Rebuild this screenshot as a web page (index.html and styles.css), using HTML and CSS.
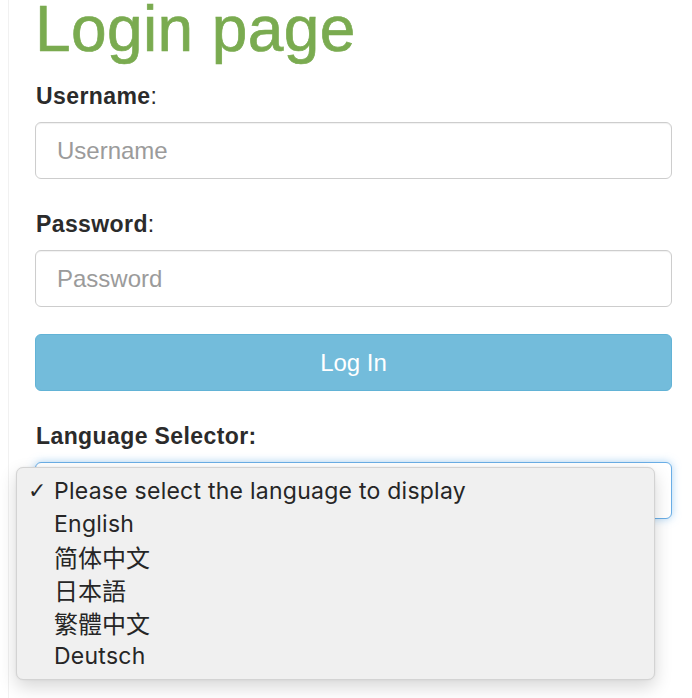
FILE: index.html
```html
<!DOCTYPE html>
<html lang="en">
<head>
<meta charset="utf-8">
<title>Login page</title>
<link rel="stylesheet" href="styles.css">
</head>
<body>
<div class="page">
  <h1 class="title">Login page</h1>
  <form class="form">
    <div class="group">
      <label class="label" for="username"><b>Username</b>:</label>
      <input class="input" id="username" type="text" placeholder="Username">
    </div>
    <div class="group">
      <label class="label" for="password"><b>Password</b>:</label>
      <input class="input" id="password" type="password" placeholder="Password">
    </div>
    <button class="btn" type="button">Log In</button>
    <div class="group lang">
      <label class="label"><b>Language Selector:</b></label>
      <div class="select-wrap">
        <div class="select"></div>
        <ul class="menu">
          <li class="item"><span class="check">✓</span>Please select the language to display</li>
          <li class="item">English</li>
          <li class="item cjk">简体中文</li>
          <li class="item cjk">日本語</li>
          <li class="item cjk">繁體中文</li>
          <li class="item">Deutsch</li>
        </ul>
      </div>
    </div>
  </form>
</div>
</body>
</html>
```

FILE: styles.css
```css
html, body {
  margin: 0;
  padding: 0;
  background: #ffffff;
}

body {
  font-family: "Liberation Sans", Arial, sans-serif;
  color: #333333;
  height: 698px;
  overflow: hidden;
}

.page {
  margin-left: 8px;
  border-left: 1px solid #f1f1f1;
  padding-left: 26px;
  padding-right: 20px;
  padding-top: 0;
  min-height: 698px;
  box-sizing: border-box;
}

.title {
  margin: 0 0 24px 0;
  padding-top: 0;
  font-size: 64px;
  line-height: 58px;
  font-weight: normal;
  letter-spacing: 0.4px;
  -webkit-text-stroke: 0.7px #7aab50;
  color: #7aab50;
}

.form {
  display: flex;
  flex-direction: column;
}

.group {
  display: flex;
  flex-direction: column;
  gap: 12px;
  margin-bottom: 31px;
}

.group:nth-child(2) {
  margin-bottom: 27px;
}

.label {
  font-size: 23px;
  line-height: 28px;
  letter-spacing: 0.4px;
  margin-left: 1px;
  color: #2b2b2b;
}

.label b {
  font-weight: bold;
}

.input {
  display: block;
  box-sizing: border-box;
  width: 100%;
  height: 57px;
  margin: 0;
  padding: 0 21px;
  border: 1.5px solid #cdcdcd;
  border-radius: 6px;
  background: #ffffff;
  box-shadow: inset 0 1px 1px rgba(0, 0, 0, 0.06);
  font-family: "Liberation Sans", Arial, sans-serif;
  font-size: 24px;
  color: #555555;
  outline: none;
}

.input::placeholder {
  color: #9b9b9b;
}

.btn {
  display: block;
  box-sizing: border-box;
  width: 100%;
  height: 57px;
  margin: 0 0 31px 0;
  padding: 0;
  border: 1px solid #62b3d6;
  border-radius: 6px;
  background: #73bcdb;
  color: #ffffff;
  font-family: "Liberation Sans", Arial, sans-serif;
  font-size: 24px;
  cursor: pointer;
}

.lang {
  margin-bottom: 0;
}

.select-wrap {
  position: relative;
}

.select {
  box-sizing: border-box;
  height: 57px;
  border: 1.5px solid #6aaee6;
  border-radius: 6px;
  background: #ffffff;
  box-shadow: 0 0 9px rgba(102, 175, 233, 0.55);
}

.menu {
  position: absolute;
  left: -19px;
  top: 5px;
  width: 639px;
  height: 213px;
  box-sizing: border-box;
  margin: 0;
  padding: 7px 0 0 0;
  list-style: none;
  background: #f0f0f0;
  border: 1px solid #d3d3d3;
  border-radius: 7px;
  box-shadow: 0 7px 18px rgba(0, 0, 0, 0.16), 0 0 2px rgba(0, 0, 0, 0.08);
}

.item {
  position: relative;
  height: 33px;
  line-height: 32px;
  padding-left: 37px;
  font-family: Inter, "Noto Sans", sans-serif;
  font-size: 23px;
  letter-spacing: 0.25px;
  color: #262626;
  white-space: nowrap;
}

.item.cjk {
  font-family: "Noto Sans CJK SC", "Noto Sans CJK JP", sans-serif;
  font-size: 24px;
  letter-spacing: 0;
}

.check {
  position: absolute;
  left: 11px;
  top: 0;
  font-family: "DejaVu Sans", sans-serif;
  font-size: 22px;
}
```
